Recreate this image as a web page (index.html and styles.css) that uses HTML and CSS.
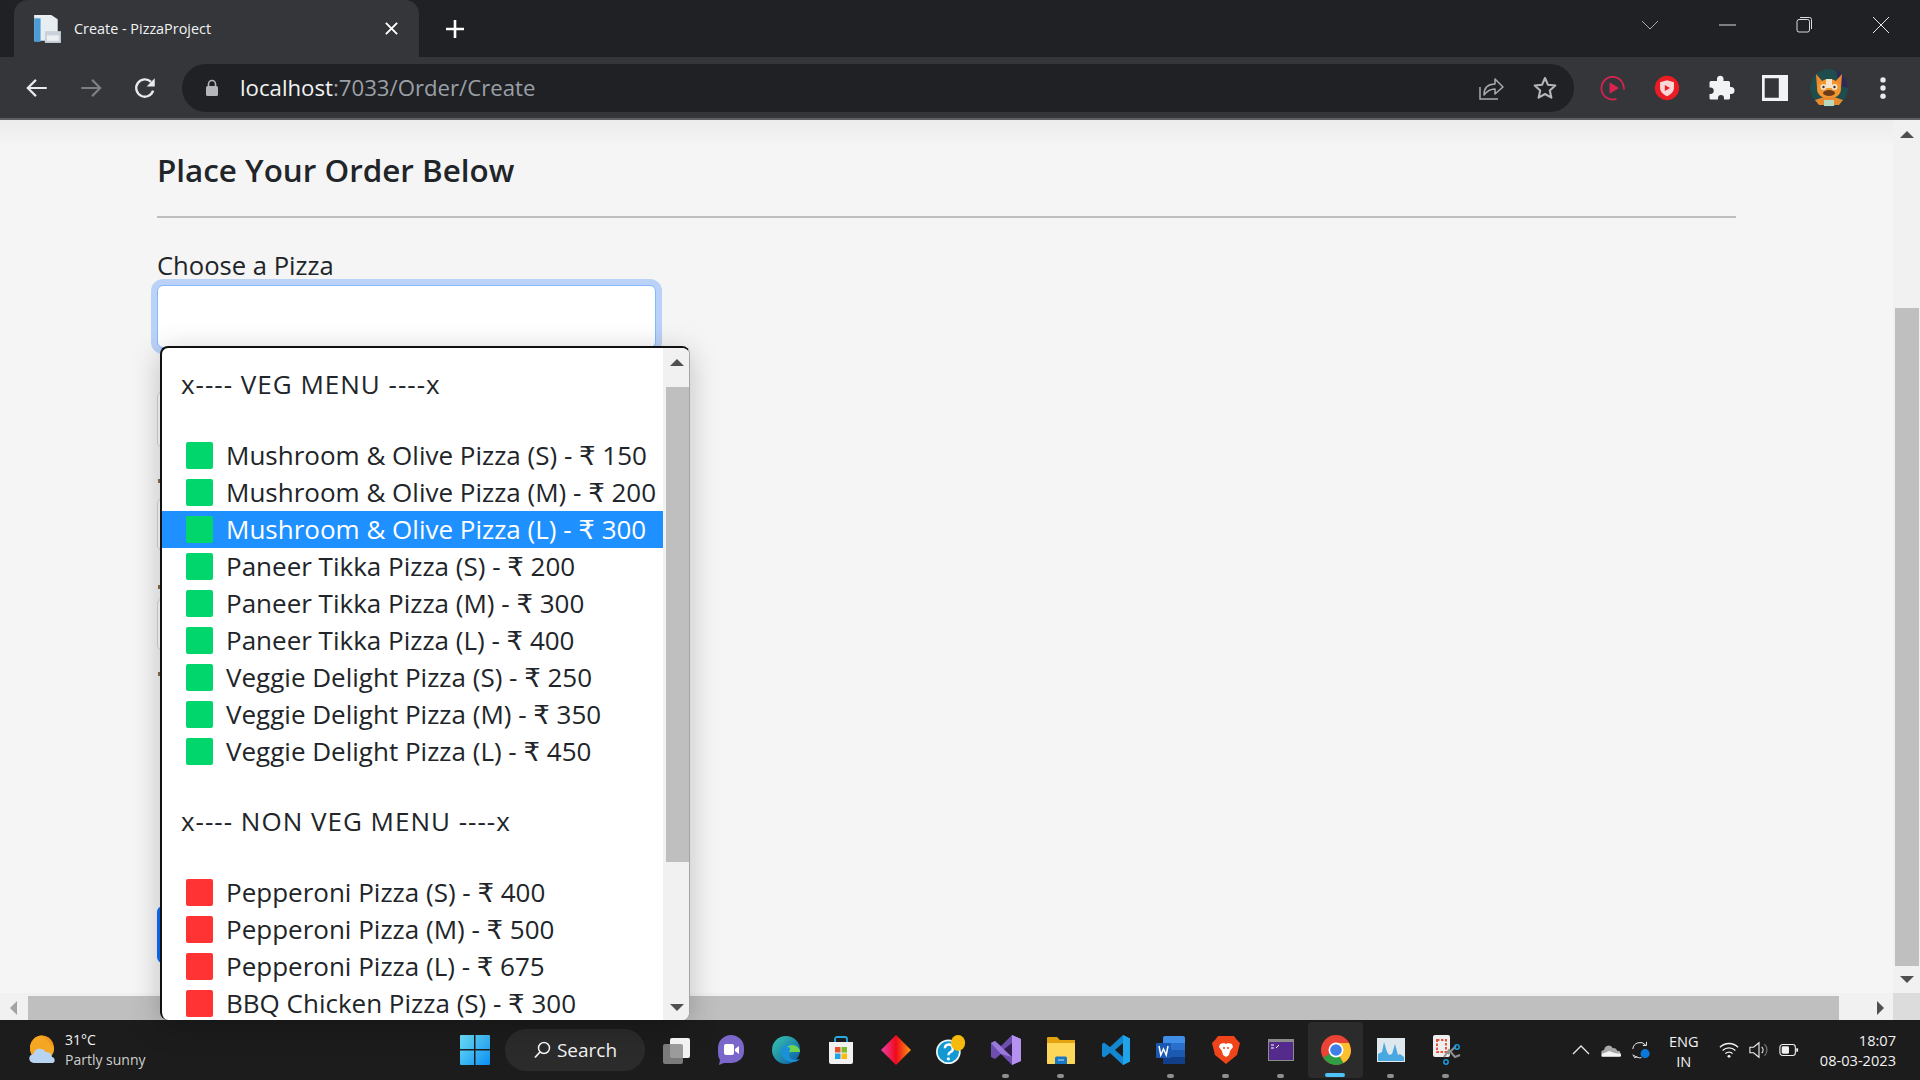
FILE: index.html
```html
<!DOCTYPE html>
<html lang="en">
<head>
    <meta charset="UTF-8">
    <meta name="viewport" content="width=device-width, initial-scale=1.0">
    <title>Create - PizzaProject</title>
    <link rel="stylesheet" href="styles.css">
</head>
<body>
    <header class="tabstrip">
        <div class="tab">
            <svg class="favicon" viewBox="0 0 28 28"><path fill="#e8edf2" d="M2 1h16l6 4v20H2z"/><path fill="#4b9bd6" d="M2 4h6v22H2z"/><path fill="#c9d2da" d="M12 16h15v11H12z"/><path fill="#eef1f4" d="M14 20h11v5H14z"/></svg>
            <span class="tab-title">Create - PizzaProject</span>
            <svg class="tab-close" viewBox="0 0 16 16"><path d="M2 2l12 12M14 2L2 14" stroke="#fff" stroke-width="2" fill="none"/></svg>
        </div>
        <svg class="new-tab" viewBox="0 0 20 20"><path d="M10 1v18M1 10h18" stroke="#fff" stroke-width="2.6"/></svg>
        <div class="window-controls">
            <svg class="win-btn" viewBox="0 0 20 20"><path d="M2 6l8 8 8-8" stroke="#a8a9ab" fill="none"/></svg>
            <svg class="win-btn" viewBox="0 0 20 20"><path d="M2 10h17" stroke="#ddd" fill="none"/></svg>
            <svg class="win-btn" viewBox="0 0 20 20"><rect x="3" y="4.5" width="12.5" height="12.5" rx="2" stroke="#ddd" fill="none"/><path d="M6 2.5h9.5a2 2 0 0 1 2 2V14" stroke="#ddd" fill="none"/></svg>
            <svg class="win-btn" viewBox="0 0 20 20"><path d="M2 2l16 16M18 2L2 18" stroke="#e8e8e8" fill="none"/></svg>
        </div>
    </header>

    <nav class="toolbar">
        <svg class="tool" viewBox="0 0 24 24"><path d="M21 12H4M11 4.500l-7.500 7.500 7.500 7.500" stroke="#e8eaed" stroke-width="2" fill="none"/></svg>
        <svg class="tool" viewBox="0 0 24 24"><path d="M3 12h17M13 4.500l7.500 7.500-7.500 7.500" stroke="#7d7f82" stroke-width="2" fill="none"/></svg>
        <svg class="tool" viewBox="0 0 24 24"><path d="M19.500 14.500A8 8 0 1 1 17.500 6.300" stroke="#e8eaed" stroke-width="2.200" fill="none"/><path d="M21 3v7.500h-7.500z" fill="#e8eaed"/></svg>
        <div class="omnibox">
            <svg class="lock" viewBox="0 0 14 18"><path d="M3.500 8V5a3.500 3.500 0 0 1 7 0v3" stroke="#b4b6b9" stroke-width="1.600" fill="none"/><rect x="1" y="7" width="12" height="10" rx="1.500" fill="#b4b6b9"/></svg>
            <span class="url"><span class="url-host">localhost</span>:7033/Order/Create</span>
            <svg class="omni-icon" viewBox="0 0 28 28"><path d="M3 13v12h18" stroke="#a9abae" stroke-width="1.500" fill="none"/><path d="M7 21c0-7 4-11 11-11V5l8 8-8 7v-5c-5 0-8 2-11 6z" stroke="#a9abae" stroke-width="1.500" fill="none" stroke-linejoin="round"/></svg>
            <svg class="omni-icon star" viewBox="0 0 28 28"><path d="M14 4l3 6.800 7.300.7-5.500 5 1.600 7.200-6.400-3.700-6.400 3.700 1.600-7.200-5.500-5 7.300-.7z" stroke="#b4b6b9" stroke-width="2.100" fill="none" stroke-linejoin="round"/></svg>
        </div>
        <div class="extensions">
            <svg class="tool" viewBox="0 0 30 30"><path d="M19 27.500A13 13 0 1 1 27.500 17" stroke="#d8244f" stroke-width="2" fill="none"/><path d="M11 8.500l11 6.500-11 6.500z" fill="#d8244f"/></svg>
            <svg class="tool" viewBox="0 0 30 30"><circle cx="15" cy="15" r="14" fill="#ec1c24"/><path d="M15 6l8 2.500v6c0 5-3.500 8-8 10-4.500-2-8-5-8-10v-6z" fill="#f7d7d7"/><path d="M12.500 11.500l6 3.500-6 3.500z" fill="#ec1c24"/></svg>
            <svg class="tool" viewBox="0 0 26 26"><path d="M9 3.500a3.300 3.300 0 0 1 6.500 0V6h5a1.500 1.500 0 0 1 1.500 1.500V12h1a3.400 3.400 0 0 1 0 7h-1v4a1.500 1.500 0 0 1-1.500 1.500h-4.500v-1.500a3 3 0 0 0-6 0v1.500H3a1.500 1.500 0 0 1-1.500-1.500v-4h1.500a3.300 3.300 0 0 0 0-6.500H1.500V7.500A1.500 1.500 0 0 1 3 6h6z" fill="#f1f3f4"/></svg>
            <svg class="tool" viewBox="0 0 24 24"><rect x="0" y="0" width="24" height="24" fill="#f1f3f4"/><rect x="2.500" y="3" width="13" height="18" fill="#35363a"/></svg>
            <svg class="tool avatar" viewBox="0 0 38 38"><circle cx="19" cy="19" r="19" fill="#1f4c4c"/><path d="M20 0a19 19 0 0 1 18 19l-9-2-3-17z" fill="#2f2a55"/><path d="M6 5l8 9-7 5zM32 5l-8 9 7 5z" fill="#f08a2c"/><ellipse cx="19" cy="20" rx="12" ry="10" fill="#f3962f"/><path d="M16 10h6v9h-6z" fill="#f5e3c7"/><circle cx="13.500" cy="18" r="3" fill="#f5e3c7"/><circle cx="24.500" cy="18" r="3" fill="#f5e3c7"/><circle cx="13.500" cy="18" r="1.200" fill="#333"/><circle cx="24.500" cy="18" r="1.200" fill="#333"/><ellipse cx="19" cy="24" rx="6" ry="3" fill="#6b3b1c"/><path d="M5 31l9-3h10l9 3-4 5H9z" fill="#e88a2f"/><path d="M14 31h10v6H14z" fill="#b8d8c0"/></svg>
            <svg class="tool" viewBox="0 0 24 24"><circle cx="12" cy="4.500" r="2.500" fill="#e8eaed"/><circle cx="12" cy="12" r="2.500" fill="#e8eaed"/><circle cx="12" cy="19.500" r="2.500" fill="#e8eaed"/></svg>
        </div>
    </nav>

    <main class="viewport">
        <section class="page">
            <h3 class="page-title">Place Your Order Below</h3>
            <hr class="rule">
            <form class="order-form">
                <label class="field-label">Choose a Pizza</label>
                <div class="input input-focus"></div>
                <div class="input input-second"></div>
                <div class="input input-third"></div>
                <div class="input input-fourth"></div>
                <div class="submit-btn"></div>
            </form>
        </section>

        <div class="vscroll">
            <span class="arrow arrow-up"></span>
            <span class="vthumb"></span>
            <span class="arrow arrow-down"></span>
        </div>
        <div class="hscroll">
            <span class="arrow arrow-left"></span>
            <span class="hthumb"></span>
            <span class="arrow arrow-right"></span>
        </div>
        <div class="corner"></div>

        <div class="dropdown">
            <ul class="options">
                <li class="group-head">x---- VEG MENU ----x</li>
                <li class="option"><span class="swatch veg"></span>Mushroom &amp; Olive Pizza (S) - ₹ 150</li>
                <li class="option"><span class="swatch veg"></span>Mushroom &amp; Olive Pizza (M) - ₹ 200</li>
                <li class="option selected"><span class="swatch veg"></span>Mushroom &amp; Olive Pizza (L) - ₹ 300</li>
                <li class="option"><span class="swatch veg"></span>Paneer Tikka Pizza (S) - ₹ 200</li>
                <li class="option"><span class="swatch veg"></span>Paneer Tikka Pizza (M) - ₹ 300</li>
                <li class="option"><span class="swatch veg"></span>Paneer Tikka Pizza (L) - ₹ 400</li>
                <li class="option"><span class="swatch veg"></span>Veggie Delight Pizza (S) - ₹ 250</li>
                <li class="option"><span class="swatch veg"></span>Veggie Delight Pizza (M) - ₹ 350</li>
                <li class="option"><span class="swatch veg"></span>Veggie Delight Pizza (L) - ₹ 450</li>
                <li class="group-head group-next">x---- NON VEG MENU ----x</li>
                <li class="option"><span class="swatch nonveg"></span>Pepperoni Pizza (S) - ₹ 400</li>
                <li class="option"><span class="swatch nonveg"></span>Pepperoni Pizza (M) - ₹ 500</li>
                <li class="option"><span class="swatch nonveg"></span>Pepperoni Pizza (L) - ₹ 675</li>
                <li class="option"><span class="swatch nonveg"></span>BBQ Chicken Pizza (S) - ₹ 300</li>
            </ul>
            <div class="list-scroll">
                <span class="arrow arrow-up"></span>
                <span class="list-thumb"></span>
                <span class="arrow arrow-down"></span>
            </div>
        </div>
    </main>

    <footer class="taskbar">
        <div class="weather">
            <svg class="weather-icon" viewBox="0 0 30 30"><ellipse cx="14" cy="13" rx="12" ry="12.500" fill="#f39a1e"/><path d="M14 .500a12 12.500 0 0 0-12 12.500c0 3 1 6 3 8h18c2-2 3-5 3-8z" fill="#f5a623"/><path d="M6 28a4.500 4.500 0 0 1-.5-9 6.500 6.500 0 0 1 12-2 5.500 5.500 0 0 1 6.500 5 3.200 3.200 0 0 1 1 6z" fill="#b8d4f2"/></svg>
            <div class="weather-text">
                <span class="temp">31°C</span>
                <span class="sky">Partly sunny</span>
            </div>
        </div>
        <svg class="start" viewBox="0 0 30 30"><defs><linearGradient id="winGrad" x1="0" y1="0" x2="1" y2="1"><stop offset="0" stop-color="#6fe3fb"/><stop offset="1" stop-color="#0a8df0"/></linearGradient></defs><path fill="url(#winGrad)" d="M0 1a1 1 0 0 1 1-1h13v14H0zM15.500 0H29a1 1 0 0 1 1 1v13H15.500zM0 15.500h14V30H1a1 1 0 0 1-1-1zM15.500 15.500H30V29a1 1 0 0 1-1 1H15.500z"/></svg>
        <div class="search">
            <svg class="search-icon" viewBox="0 0 18 18"><circle cx="11" cy="7" r="5.500" stroke="#f2f2f2" stroke-width="1.500" fill="none"/><path d="M7 11l-5 5.500" stroke="#f2f2f2" stroke-width="1.800"/></svg>
            <span>Search</span>
        </div>
        <div class="apps">
            <div class="app"><svg viewBox="0 0 30 30"><rect x="9" y="3" width="20" height="20" rx="2" fill="#f2f2f2"/><rect x="2" y="9" width="20" height="20" rx="2" fill="#8c8c8c" opacity=".85"/></svg></div>
            <div class="app"><svg viewBox="0 0 30 30"><path d="M15 0a13 13 0 0 1 13 13v3a12 12 0 0 1-13 12H8l-5 2 1-5a12 12 0 0 1-2-7v-5A13 13 0 0 1 15 0z" fill="#7a67c9"/><rect x="8" y="9" width="10" height="11" rx="2" fill="#fff"/><path d="M19 14l4-3v8l-4-3z" fill="#fff"/></svg></div>
            <div class="app"><svg viewBox="0 0 30 30"><defs><linearGradient id="edgeGrad" x1="0" y1="0" x2="1" y2="1"><stop offset="0" stop-color="#37c6b0"/><stop offset="1" stop-color="#0c59a4"/></linearGradient></defs><circle cx="15" cy="15" r="14" fill="url(#edgeGrad)"/><path d="M29 17c0-5-5-8-10-8-6 0-9 4-9 8 0 6 6 10 12 10 3 0 5-1 7-3-6 2-11 0-11-4 0-2 2-3 4-3z" fill="#1a90d8"/><path d="M18 17h11c0-4-4-7-8-7-2 0-4 1-5 2 3 0 4 2 2 5z" fill="#6ed34d"/></svg></div>
            <div class="app"><svg viewBox="0 0 30 30"><path d="M9 8V4a2 2 0 0 1 2-2h8a2 2 0 0 1 2 2v4" stroke="#2aa8e0" stroke-width="1.800" fill="none"/><path d="M3 7h24v20a2 2 0 0 1-2 2H5a2 2 0 0 1-2-2z" fill="#f1f1f1"/><rect x="9" y="12" width="5.500" height="5.500" fill="#e8522b"/><rect x="15.500" y="12" width="5.500" height="5.500" fill="#7fba2b"/><rect x="9" y="18.500" width="5.500" height="5.500" fill="#1ea4e8"/><rect x="15.500" y="18.500" width="5.500" height="5.500" fill="#fdb90e"/></svg></div>
            <div class="app"><svg viewBox="0 0 30 30"><defs><linearGradient id="rubyGrad" x1="0" y1="0" x2="1" y2="0"><stop offset="0" stop-color="#ec3fb0"/><stop offset=".5" stop-color="#f00a1a"/><stop offset="1" stop-color="#fb9a10"/></linearGradient></defs><path d="M15 0l15 15-15 15L0 15z" fill="url(#rubyGrad)"/></svg></div>
            <div class="app"><svg viewBox="0 0 34 34"><circle cx="14" cy="19" r="13" fill="#1399d2" stroke="#eef6fa" stroke-width="2"/><path d="M10 15a4.500 4.500 0 1 1 6 4.500c-1.500 1-2 2-2 3.500" stroke="#fff" stroke-width="2.600" fill="none"/><circle cx="14" cy="27" r="1.800" fill="#fff"/><ellipse cx="25" cy="9" rx="8" ry="9" fill="#f6ba0c"/></svg></div>
            <div class="app running"><svg viewBox="0 0 30 30"><path d="M21 0l9 4v22l-9 4-11-11-6 5-4-2V8l4-2 6 5z" fill="#6e4fb0"/><path d="M21 8v14l-9-7z" fill="#2d1e4e"/><path d="M21 0l9 4v22l-9 4z" fill="#b692f0"/><path d="M0 8l4-2 17 16-11-3z" fill="#9a78dc"/></svg></div>
            <div class="app running"><svg viewBox="0 0 30 30"><path d="M1 3a1 1 0 0 1 1-1h9l3 3h15v23a1 1 0 0 1-1 1H2a1 1 0 0 1-1-1z" fill="#e3a20f"/><path d="M1 8h28v20a1 1 0 0 1-1 1H2a1 1 0 0 1-1-1z" fill="#fdd75a"/><path d="M9 23a1.500 1.500 0 0 1 1.500-1.500h9A1.500 1.500 0 0 1 21 23v6H9z" fill="#1976c4"/><path d="M12 25h6" stroke="#bfe0f5" stroke-width="1"/></svg></div>
            <div class="app"><svg viewBox="0 0 30 30"><path d="M22 0l7 3.500v23L22 30 9 18l-6 4.500-2-1.500V9l2-1.500L9 12z" fill="#1387cf"/><path d="M22 8v14l-8-7z" fill="#1c1c1c"/><path d="M22 0l7 3.500v23L22 30z" fill="#20a3e8"/></svg></div>
            <div class="app running"><svg viewBox="0 0 30 30"><rect x="7" y="1" width="22" height="28" rx="2" fill="#3f8fe8"/><rect x="7" y="8" width="22" height="7" fill="#2a6fcb"/><rect x="7" y="15" width="22" height="7" fill="#1c59b0"/><rect x="7" y="22" width="22" height="7" fill="#123f8a"/><rect x="0" y="8" width="15" height="15" rx="1" fill="#1b57b5"/><path d="M3 11l1.800 9 2.700-6 2.700 6L12 11" stroke="#fff" stroke-width="1.500" fill="none"/></svg></div>
            <div class="app running"><svg viewBox="0 0 30 30"><path d="M7 1h16l3 4 3 3-3 12-11 9-11-9L1 8l3-3z" fill="#f0441b"/><path d="M9 9l4-1 2 1 2-1 4 1 1 3-3 4-1 4-3 2-3-2-1-4-3-4z" fill="#fff"/><path d="M12 13h2M16 13h2" stroke="#f0441b" stroke-width="1.500"/></svg></div>
            <div class="app running"><svg viewBox="0 0 30 30"><rect x="2" y="4" width="26" height="22" fill="#8c8c8c"/><rect x="3" y="7" width="24" height="18" fill="#542a8c"/><path d="M5 10h3M5 13h3M10 13l3-3" stroke="#fff" stroke-width="1"/></svg></div>
            <div class="app active"><svg viewBox="0 0 30 30"><circle cx="15" cy="15" r="15" fill="#eb4335"/><path d="M15 15L2.300 22.500A15 15 0 0 0 22.500 28z" fill="#2f9e44"/><path d="M15 15l7.500 13A15 15 0 0 0 30 15L28 8H15z" fill="#fbc02d"/><circle cx="15" cy="15" r="7.500" fill="#fff"/><circle cx="15" cy="15" r="5.800" fill="#3f7fe8"/></svg></div>
            <div class="app running"><svg viewBox="0 0 30 30"><rect x="1" y="3" width="28" height="24" fill="#dfe8ee"/><path d="M2 26V19l4-2 2-10 3 10 2 3 3-1 3-10 3 11 2-1 4 3v4z" fill="#4aa8e0"/></svg></div>
            <div class="app running"><svg viewBox="0 0 30 30"><rect x="2" y="0" width="17" height="22" rx="2" fill="#eeeeee"/><path d="M6 5h9v12H6z" stroke="#e8543a" stroke-width="2" stroke-dasharray="2.500 1.500" fill="none"/><path d="M13 22l5-7 6 7 5-2M17 19l8-8" stroke="#8f8f8f" stroke-width="2" fill="none"/><circle cx="26" cy="12" r="2.200" stroke="#1b9be0" stroke-width="1.500" fill="none"/><circle cx="15" cy="27" r="2.200" stroke="#1b9be0" stroke-width="1.500" fill="none"/></svg></div>
        </div>
        <div class="tray">
            <svg class="tray-icon" viewBox="0 0 20 20"><path d="M2 14l8-8 8 8" stroke="#e6e6e6" stroke-width="1.300" fill="none"/></svg>
            <svg class="tray-icon" viewBox="0 0 22 20"><path d="M4 17a3.500 3.500 0 0 1-.5-7 5 5 0 0 1 9.500-2 4.500 4.500 0 0 1 5 3 3 3 0 0 1 1 6z" fill="#a9a9a9"/><path d="M1 17.500a2.500 2.500 0 0 1 2-4l6-2.500 5 2 5 1a2 2 0 0 1 2 3.500z" fill="#f4f4f4"/></svg>
            <svg class="tray-icon" viewBox="0 0 22 22"><path d="M2 10a8 8 0 0 1 14-4.500M17 2v4h-4M2 16l2 3.500 3-1.500M3.500 17c2 2 5 3 8 2.500" stroke="#ececec" stroke-width="1.100" fill="none"/><circle cx="15.500" cy="15" r="5" fill="#0a78d8"/></svg>
            <div class="lang"><span>ENG</span><span>IN</span></div>
            <svg class="tray-icon wifi" viewBox="0 0 22 20"><path d="M1 7a14 14 0 0 1 20 0M4 10.500a10 10 0 0 1 14 0M7 14a5.500 5.500 0 0 1 8 0" stroke="#f0f0f0" stroke-width="1.500" fill="none"/><circle cx="11" cy="17" r="1.600" fill="#f0f0f0"/></svg>
            <svg class="tray-icon" viewBox="0 0 22 20"><path d="M1 7h4l6-5v16l-6-5H1z" stroke="#f0f0f0" stroke-width="1.200" fill="none"/><path d="M14 6.500a5 5 0 0 1 0 7" stroke="#f0f0f0" stroke-width="1.300" fill="none"/><path d="M17 3.500a9 9 0 0 1 0 13" stroke="#777" stroke-width="1.300" fill="none"/></svg>
            <svg class="tray-icon" viewBox="0 0 22 20"><rect x="1" y="4" width="17" height="12" rx="3" stroke="#f0f0f0" stroke-width="1.200" fill="none"/><rect x="3" y="6" width="8" height="8" rx="1.500" fill="#f0f0f0"/><path d="M19 8h1.500a.5.5 0 0 1 .5.5v3a.5.5 0 0 1-.5.5H19z" fill="#f0f0f0"/></svg>
            <div class="clock"><span>18:07</span><span>08-03-2023</span></div>
        </div>
    </footer>
</body>
</html>
```

FILE: styles.css
```css
* {
    margin: 0;
    padding: 0;
    box-sizing: border-box;
    font-family: 'Open Sans', 'DejaVu Sans', sans-serif;
}
body {
    width: 1920px;
    height: 1080px;
    display: flex;
    flex-direction: column;
    overflow: hidden;
    background: #f5f5f5;
    color: #212529;
}
ul {
    list-style: none;
}

/* browser chrome */
.tabstrip {
    height: 57px;
    flex: none;
    display: flex;
    align-items: flex-end;
    background: #202124;
    padding-left: 14px;
}
.tab {
    width: 405px;
    height: 57px;
    display: flex;
    align-items: center;
    padding: 0 20px 0 18px;
    background: #35363a;
    border-radius: 14px 14px 0 0;
    color: #f1f3f4;
}
.favicon {
    width: 30px;
    height: 30px;
    flex: none;
}
.tab-title {
    margin-left: 12px;
    font-size: 14.400px;
    flex: 1;
    white-space: nowrap;
}
.tab-close {
    width: 15px;
    height: 15px;
}
.new-tab {
    width: 20px;
    height: 20px;
    margin: 0 0 18px 26px;
}
.window-controls {
    margin-left: auto;
    align-self: flex-start;
    display: flex;
    padding-top: 15px;
    padding-right: 29px;
    gap: 57px;
}
.win-btn {
    width: 20px;
    height: 20px;
}
.toolbar {
    height: 63px;
    flex: none;
    display: flex;
    align-items: center;
    padding: 0 10px;
    background: #35363a;
    border-bottom: 2px solid #5f6063;
}
.tool {
    width: 54px;
    height: 26px;
    flex: none;
}
.omnibox {
    width: 1394px;
    height: 48px;
    margin: 0 12px 0 10px;
    display: flex;
    align-items: center;
    padding: 0 15px 0 23px;
    background: #202124;
    border-radius: 24px;
}
.lock {
    width: 14px;
    height: 18px;
    flex: none;
}
.url {
    margin-left: 21px;
    font-size: 22.200px;
    color: #9aa0a6;
    flex: 1;
    white-space: nowrap;
}
.url-host {
    color: #f1f3f4;
}
.omni-icon {
    width: 28px;
    height: 28px;
    flex: none;
}
.star {
    margin-left: 26px;
}
.extensions {
    display: flex;
    align-items: center;
}
.avatar {
    height: 38px;
}

/* page area */
.viewport {
    position: relative;
    flex: 1;
    display: grid;
    grid-template-columns: 1fr 27px;
    grid-template-rows: 1fr 27px;
    background: #f5f5f5;
    min-height: 0;
}
.page {
    padding: 28px 157px 0 157px;
    background: linear-gradient(#ececec, #f5f5f5 26px);
    overflow: hidden;
}
.page-title {
    font-size: 31.400px;
    font-weight: 600;
    line-height: 43px;
    height: 44px;
}
.rule {
    margin-top: 24px;
    border: none;
    height: 2px;
    background: #bfbfbf;
}
.order-form {
    padding-top: 22px;
}
.field-label {
    display: block;
    font-size: 25.600px;
    line-height: 52px;
    height: 45px;
}
.input {
    position: relative;
    width: 499px;
    background: #fff;
    border: 1px solid #ced4da;
    border-radius: 6px;
}
.input-focus {
    height: 63px;
    border-color: #86b7fe;
    box-shadow: 0 0 0 6px #bad2f8;
}
.input-second {
    height: 57px;
    margin-top: 43px;
}
.input-third {
    height: 53px;
    margin-top: 50px;
}
.input-fourth {
    height: 53px;
    margin-top: 47px;
}
/* the foot of a label peeks out beside the open list */
.input-second::after,
.input-third::after,
.input-fourth::after {
    content: "";
    position: absolute;
    left: 0;
    top: 87px;
    width: 3px;
    height: 4px;
    background: #8b6b45;
}
.input-third::after {
    top: 86px;
}
.input-fourth::after {
    top: 73px;
}
.submit-btn {
    width: 140px;
    height: 57px;
    margin-top: 255px;
    background: #0d6efd;
    border-radius: 6px;
}

/* scrollbars */
.arrow {
    display: block;
    width: 0;
    height: 0;
    border-style: solid;
    border-color: transparent;
}
.arrow-up {
    border-width: 0 7px 7px;
    border-bottom-color: #505050;
}
.arrow-down {
    border-width: 7px 7px 0;
    border-top-color: #505050;
}
.arrow-left {
    border-width: 7px 7px 7px 0;
    border-right-color: #a3a3a3;
}
.arrow-right {
    border-width: 7px 0 7px 7px;
    border-left-color: #505050;
}
.vscroll {
    display: flex;
    flex-direction: column;
    align-items: center;
    padding-top: 11px;
    background: #f1f1f1;
}
.vthumb {
    width: 24px;
    height: 658px;
    margin: 170px 0 10px;
    background: #bfbfbf;
}
.hscroll {
    display: flex;
    align-items: center;
    padding: 3px 0 0 10px;
    background: #f1f1f1;
}
.hthumb {
    width: 1811px;
    height: 24px;
    margin: 0 38px 0 11px;
    background: #bfbfbf;
}
.corner {
    background: #dcdcdc;
}

/* open select list */
.dropdown {
    position: absolute;
    left: 160px;
    top: 226px;
    width: 530px;
    height: 674px;
    display: flex;
    overflow: hidden;
    background: #fff;
    border-top: 2px solid #111;
    border-left: 2px solid #111;
    border-right: 1px solid #a5a5a5;
    border-radius: 8px;
    box-shadow: 0 6px 30px rgba(0, 0, 0, 0.22);
}
.options {
    flex: 1;
    padding-top: 19px;
    font-size: 26px;
    white-space: nowrap;
    overflow: hidden;
}
.group-head {
    height: 37px;
    line-height: 35px;
    padding-left: 19px;
    letter-spacing: 1px;
}
.group-next {
    margin-top: 34px;
}
.group-head + .option {
    margin-top: 33px;
}
.option {
    height: 37px;
    display: flex;
    align-items: center;
    padding: 0 0 2px 24px;
}
.selected {
    background: #1e90ff;
    color: #fff;
}
.swatch {
    width: 27px;
    height: 27px;
    margin: 2px 13px 0 0;
    border-radius: 2px;
    flex: none;
}
.veg {
    background: #00d66c;
}
.nonveg {
    background: #ff3333;
}
.list-scroll {
    width: 26px;
    flex: none;
    display: flex;
    flex-direction: column;
    align-items: center;
    padding: 11px 0 0 2px;
    background: #f1f1f1;
}
.list-thumb {
    width: 23px;
    height: 475px;
    margin: 21px 0 auto;
    background: #bfbfbf;
}
.list-scroll .arrow-down {
    margin-bottom: 9px;
}

/* windows taskbar */
.taskbar {
    height: 60px;
    flex: none;
    display: flex;
    align-items: center;
    background: #1c1c1c;
    color: #f2f2f2;
}
.weather {
    width: 460px;
    display: flex;
    align-items: center;
    padding-left: 28px;
}
.weather-icon {
    width: 30px;
    height: 30px;
    flex: none;
}
.weather-text {
    margin-left: 7px;
    display: flex;
    flex-direction: column;
    font-size: 14px;
    line-height: 20px;
}
.sky {
    color: #cfcfcf;
}
.start {
    width: 30px;
    height: 30px;
    flex: none;
}
.search {
    width: 140px;
    height: 42px;
    margin-left: 15px;
    display: flex;
    align-items: center;
    justify-content: center;
    gap: 6px;
    background: #2b2b2b;
    border-radius: 21px;
    font-size: 19px;
}
.search-icon {
    width: 18px;
    height: 18px;
}
.apps {
    display: flex;
    margin-left: 3px;
}
.app {
    position: relative;
    width: 55px;
    height: 56px;
    display: flex;
    align-items: center;
    justify-content: center;
}
.app svg {
    width: 30px;
    height: 30px;
}
.running::after {
    content: "";
    position: absolute;
    left: 24px;
    bottom: 0;
    width: 7px;
    height: 4px;
    border-radius: 2px;
    background: #8f8f8f;
}
.active {
    background: #2b2b2b;
    border-radius: 4px;
}
.active::after {
    content: "";
    position: absolute;
    left: 17px;
    bottom: 1px;
    width: 20px;
    height: 4px;
    border-radius: 2px;
    background: #4fc3f7;
}
.tray {
    margin-left: auto;
    display: flex;
    align-items: center;
    padding-right: 24px;
}
.tray-icon {
    width: 20px;
    height: 20px;
    margin-right: 10px;
}
.lang {
    width: 46px;
    margin: 0 12px -1px 0;
    display: flex;
    flex-direction: column;
    align-items: center;
    font-size: 14.600px;
    line-height: 20px;
}
.clock {
    margin-left: 11px;
    display: flex;
    flex-direction: column;
    align-items: flex-end;
    font-size: 14.600px;
    line-height: 20px;
}
```
